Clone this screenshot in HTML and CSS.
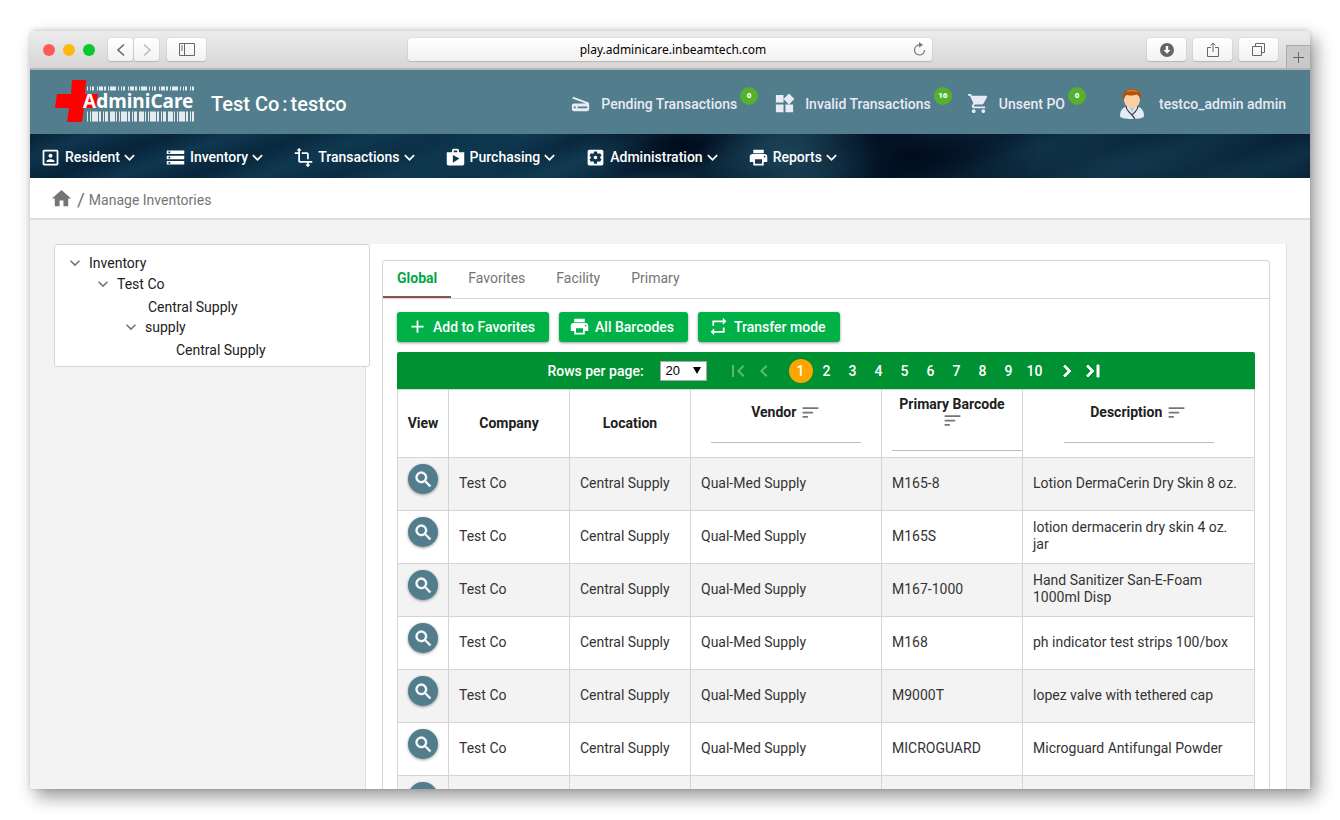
FILE: index.html
```
<!DOCTYPE html>
<html lang="en">
<head>
  <meta charset="UTF-8">
  <meta name="viewport" content="width=device-width, initial-scale=1.0">
  <title>AdminiCare - Manage Inventories</title>
  <link rel="stylesheet" href="styles.css">
</head>
<body>
  <!-- shared icons -->
  <svg class="sprite" aria-hidden="true">
    <symbol id="i-down" viewBox="0 0 24 24"><path d="M16.59 8.59L12 13.17 7.41 8.59 6 10l6 6 6-6z"/></symbol>
    <symbol id="i-print" viewBox="0 0 24 24"><path d="M19 8H5c-1.66 0-3 1.34-3 3v6h4v4h12v-4h4v-6c0-1.66-1.34-3-3-3zm-3 11H8v-5h8v5zm3-7c-.55 0-1-.45-1-1s.45-1 1-1 1 .45 1 1-.45 1-1 1zm-1-9H6v4h12V3z"/></symbol>
    <symbol id="i-search" viewBox="0 0 24 24"><path d="M15.5 14h-.79l-.28-.27C15.41 12.59 16 11.11 16 9.5 16 5.91 13.09 3 9.5 3S3 5.91 3 9.5 5.91 16 9.5 16c1.61 0 3.09-.59 4.23-1.57l.27.28v.79l5 4.99L20.49 19l-4.99-5zm-6 0C7.01 14 5 11.99 5 9.5S7.01 5 9.5 5 14 7.01 14 9.5 11.99 14 9.5 14z"/></symbol>
    <symbol id="i-sort" viewBox="0 0 24 24"><path d="M3 18h6v-2H3v2zM3 6v2h18V6H3zm0 7h12v-2H3v2z"/></symbol>
  </svg>

  <div class="window">
    <div class="chrome">
      <div class="chrome-left">
        <span class="dot red"></span>
        <span class="dot yellow"></span>
        <span class="dot green"></span>
        <div class="history">
          <button class="chrome-btn" aria-label="Back"><svg width="10" height="14" viewBox="0 0 10 14"><path d="M8 1.500L2 7l6 5.500" fill="none" stroke="#666" stroke-width="1.600"/></svg></button>
          <button class="chrome-btn" aria-label="Forward"><svg width="10" height="14" viewBox="0 0 10 14"><path d="M2 1.500L8 7l-6 5.500" fill="none" stroke="#bbb" stroke-width="1.600"/></svg></button>
        </div>
        <button class="chrome-btn wide" aria-label="Sidebar"><svg width="16" height="13" viewBox="0 0 16 13"><path d="M.5.5h15v12H.5zM5.500.5v12M2 3h2M2 5h2M2 7h2" fill="none" stroke="#666"/></svg></button>
      </div>
      <div class="url-bar">
        <input class="url" type="text" value="play.adminicare.inbeamtech.com" aria-label="Address">
        <button class="reload" aria-label="Reload"><svg width="13" height="15" viewBox="0 0 13 15"><path d="M7 3a5 5 0 1 0 4.500 5" fill="none" stroke="#777" stroke-width="1.200"/><path d="M6 0l4 3-4 2.500z" fill="#777"/></svg></button>
      </div>
      <div class="chrome-right">
        <button class="chrome-btn wide" aria-label="Downloads"><svg width="14" height="14" viewBox="0 0 14 14"><circle cx="7" cy="7" r="7" fill="#666"/><path d="M5.800 3h2.400v4h2.300L7 10.800 3.500 7h2.300z" fill="#fff"/></svg></button>
        <button class="chrome-btn wide" aria-label="Share"><svg width="12" height="16" viewBox="0 0 12 16"><path d="M4 5.500H.5v9h11v-9H8M6 10V1M3.500 3.500L6 1l2.500 2.500" fill="none" stroke="#666"/></svg></button>
        <button class="chrome-btn wide" aria-label="Show tabs"><svg width="13" height="13" viewBox="0 0 13 13"><path d="M.5 3.500h9v9h-9zM3.500 3.500v-3h9v9h-3" fill="none" stroke="#666"/></svg></button>
        <button class="new-tab" aria-label="New tab"><svg width="11" height="11" viewBox="0 0 11 11"><path d="M5.500 0v11M0 5.500h11" stroke="#666"/></svg></button>
      </div>
    </div>

    <header class="header">
      <a class="logo" href="#" aria-label="AdminiCare">
        <svg width="142" height="44" viewBox="0 0 142 44">
          <path d="M18 1h14l-1 14h13l-2 14H30l-2 14H13l2-14H1l2-14h14z" fill="#f00"/>
          <path d="M33 9.500h107" stroke="#fff" stroke-width="4" stroke-dasharray="1 2 1 1 2 3 1 1 4 1 2 2 1 1 6 2" opacity=".85"/>
          <path d="M33 37.500h107" stroke="#fff" stroke-width="10" stroke-dasharray="1 2 1 1 6 1 2 2 1 1 3 2 5 1" opacity=".85"/>
          <text class="logo-text" x="29" y="29">AdminiCare</text>
        </svg>
      </a>
      <h1 class="facility"><span>Test Co</span><span>:</span><span>testco</span></h1>
      <div class="header-links">
        <a class="header-link" href="#">
          <svg class="icon-lg" viewBox="0 0 24 24"><path d="M19.800 10.700L4.200 5l-.7 1.900L17.600 12H5c-1.100 0-2 .9-2 2v4c0 1.100.9 2 2 2h14c1.100 0 2-.9 2-2v-5.500c0-.8-.5-1.600-1.200-1.800zM7 17H5v-2h2v2zm12 0H9v-2h10v2z"/></svg>
          <span>Pending Transactions</span>
          <span class="badge">0</span>
        </a>
        <a class="header-link" href="#">
          <svg class="icon-lg" viewBox="0 0 24 24"><path d="M13 13v8h8v-8h-8zM3 21h8v-8H3v8zM3 3v8h8V3H3zm13.660-1.310L11 7.340 16.660 13l5.660-5.660-5.660-5.650z"/></svg>
          <span>Invalid Transactions</span>
          <span class="badge">16</span>
        </a>
        <a class="header-link" href="#">
          <svg class="icon-lg" viewBox="0 0 24 24"><path d="M7 18c-1.100 0-1.990.9-1.990 2S5.900 22 7 22s2-.9 2-2-.9-2-2-2zM1 2v2h2l3.600 7.590-1.350 2.450c-.16.28-.25.61-.25.96 0 1.100.9 2 2 2h12v-2H7.420c-.14 0-.25-.11-.25-.25l.03-.12.9-1.630h7.450c.75 0 1.410-.41 1.750-1.030l3.580-6.490c.08-.14.12-.31.12-.48 0-.55-.45-1-1-1H5.210l-.94-2H1zm16 16c-1.100 0-1.990.9-1.990 2s.89 2 1.990 2 2-.9 2-2-.9-2-2-2z"/></svg>
          <span>Unsent PO</span>
          <span class="badge">0</span>
        </a>
      </div>
      <a class="user" href="#">
        <svg width="26" height="32" viewBox="0 0 26 32">
          <path d="M1 28c0-6 3-9 8-10h8c5 1 8 4 8 10 0 2-5 3-12 3S1 30 1 28z" fill="#e3ebfa"/>
          <path d="M9 18l4 6 4-6z" fill="#a9c4e8"/>
          <path d="M5 11c0 6 4 9.500 8 9.500s8-3.500 8-9.500l-2-5H7z" fill="#fbcfa4"/>
          <path d="M4.500 12C2 5 7 1 13 1s11 4 8.500 11c-.5-3-2-5-4-5.500-3 1.500-8 1-10 .5-1.500 1-2.500 3-3 5z" fill="#b5500c"/>
          <path d="M7 4c3-3 9-3 12 0-4-1-8-1-12 0z" fill="#e08132"/>
          <path d="M7 18c0 5 3 5 6 9 3-4 6-4 6-9M13 27l3 4" fill="none" stroke="#444" stroke-width="1.300"/>
        </svg>
        <span>testco_admin admin</span>
      </a>
    </header>

    <nav class="menu">
      <button class="menu-item">
        <svg class="icon" viewBox="0 0 24 24"><path d="M12 12.250c1.240 0 2.250-1.010 2.250-2.250S13.240 7.750 12 7.750 9.750 8.760 9.750 10s1.010 2.250 2.250 2.250zm4.500 4c0-1.500-3-2.250-4.500-2.250s-4.500.75-4.500 2.250V17h9v-.75zM19 3H5c-1.100 0-2 .9-2 2v14c0 1.100.9 2 2 2h14c1.100 0 2-.9 2-2V5c0-1.100-.9-2-2-2zm0 16H5V5h14v14z"/></svg>
        <span>Resident</span>
        <svg class="icon arrow"><use href="#i-down"/></svg>
      </button>
      <button class="menu-item">
        <svg class="icon" viewBox="0 0 24 24"><path d="M2 20h20v-4H2v4zm2-3h2v2H4v-2zM2 4v4h20V4H2zm4 3H4V5h2v2zm-4 7h20v-4H2v4zm2-3h2v2H4v-2z"/></svg>
        <span>Inventory</span>
        <svg class="icon arrow"><use href="#i-down"/></svg>
      </button>
      <button class="menu-item">
        <svg class="icon" viewBox="0 0 24 24"><path d="M22 18v-2H8V4h2L7 1 4 4h2v2H2v2h4v8c0 1.100.9 2 2 2h8v2h-2l3 3 3-3h-2v-2h4zM10 8h6v6h2V8c0-1.100-.9-2-2-2h-6v2z"/></svg>
        <span>Transactions</span>
        <svg class="icon arrow"><use href="#i-down"/></svg>
      </button>
      <button class="menu-item">
        <svg class="icon" viewBox="0 0 24 24"><path d="M16 6V4c0-1.110-.89-2-2-2h-4c-1.110 0-2 .89-2 2v2H2v13c0 1.110.89 2 2 2h16c1.110 0 2-.89 2-2V6h-6zm-6-2h4v2h-4V4zM9 18V9l7.500 4L9 18z"/></svg>
        <span>Purchasing</span>
        <svg class="icon arrow"><use href="#i-down"/></svg>
      </button>
      <button class="menu-item">
        <svg class="icon" viewBox="0 0 24 24"><path d="M12 10c-1.100 0-2 .9-2 2s.9 2 2 2 2-.9 2-2-.9-2-2-2zm7-7H5c-1.110 0-2 .9-2 2v14c0 1.100.89 2 2 2h14c1.110 0 2-.9 2-2V5c0-1.100-.89-2-2-2zm-1.750 9c0 .23-.02.46-.05.68l1.480 1.160c.13.11.17.3.08.45l-1.400 2.420c-.09.15-.27.21-.43.15l-1.740-.7c-.36.28-.76.51-1.180.69l-.26 1.850c-.03.17-.18.3-.35.3h-2.800c-.17 0-.32-.13-.35-.29l-.26-1.850c-.43-.18-.82-.41-1.180-.69l-1.740.7c-.16.06-.34 0-.43-.15l-1.400-2.420c-.09-.15-.05-.34.08-.45l1.480-1.160c-.03-.23-.05-.46-.05-.69 0-.23.02-.46.05-.68l-1.480-1.160c-.13-.11-.17-.3-.08-.45l1.400-2.420c.09-.15.27-.21.43-.15l1.740.7c.36-.28.76-.51 1.180-.69l.26-1.850c.03-.17.18-.3.35-.3h2.800c.17 0 .32.13.35.29l.26 1.850c.43.18.82.41 1.180.69l1.740-.7c.16-.06.34 0 .43.15l1.400 2.420c.09.15.05.34-.08.45l-1.480 1.160c.03.23.05.46.05.69z"/></svg>
        <span>Administration</span>
        <svg class="icon arrow"><use href="#i-down"/></svg>
      </button>
      <button class="menu-item">
        <svg class="icon"><use href="#i-print"/></svg>
        <span>Reports</span>
        <svg class="icon arrow"><use href="#i-down"/></svg>
      </button>
    </nav>

    <div class="breadcrumb">
      <a href="#" class="home" aria-label="Home"><svg class="icon-lg" viewBox="0 0 24 24"><path d="M10 20v-6h4v6h5v-8h3L12 3 2 12h3v8z"/></svg></a>
      <span class="slash">/</span>
      <a href="#">Manage Inventories</a>
    </div>

    <main class="content">
      <aside class="tree">
        <ul>
          <li>
            <button class="node"><svg class="toggle"><use href="#i-down"/></svg>Inventory</button>
            <ul>
              <li>
                <button class="node"><svg class="toggle"><use href="#i-down"/></svg>Test Co</button>
                <ul>
                  <li><button class="node leaf">Central Supply</button></li>
                  <li>
                    <button class="node"><svg class="toggle"><use href="#i-down"/></svg>supply</button>
                    <ul>
                      <li><button class="node leaf">Central Supply</button></li>
                    </ul>
                  </li>
                </ul>
              </li>
            </ul>
          </li>
        </ul>
      </aside>

      <section class="panel">
        <div class="card">
          <div class="tabs">
            <button class="tab active">Global</button>
            <button class="tab">Favorites</button>
            <button class="tab">Facility</button>
            <button class="tab">Primary</button>
          </div>
          <div class="card-body">
            <div class="actions">
              <button class="btn"><svg class="icon" viewBox="0 0 24 24"><path d="M19 13h-6v6h-2v-6H5v-2h6V5h2v6h6v2z"/></svg>Add to Favorites</button>
              <button class="btn"><svg class="icon"><use href="#i-print"/></svg>All Barcodes</button>
              <button class="btn"><svg class="icon" viewBox="0 0 24 24"><path d="M7 7h10v3l4-4-4-4v3H5v6h2V7zm10 10H7v-3l-4 4 4 4v-3h12v-6h-2v4z"/></svg>Transfer mode</button>
            </div>

            <div class="pager">
              <label for="rows">Rows per page:</label>
              <div class="rows">
                <select id="rows">
                  <option>10</option>
                  <option selected>20</option>
                  <option>50</option>
                </select>
              </div>
              <div class="pages">
                <button class="page" disabled aria-label="First page"><svg viewBox="0 0 24 24"><path d="M18.410 16.590L13.820 12l4.590-4.590L17 6l-6 6 6 6zM6 6h2v12H6z"/></svg></button>
                <button class="page" disabled aria-label="Previous page"><svg viewBox="0 0 24 24"><path d="M15.410 7.410L14 6l-6 6 6 6 1.410-1.410L10.830 12z"/></svg></button>
              </div>
              <div class="pages numbers">
                <button class="page current">1</button>
                <button class="page">2</button>
                <button class="page">3</button>
                <button class="page">4</button>
                <button class="page">5</button>
                <button class="page">6</button>
                <button class="page">7</button>
                <button class="page">8</button>
                <button class="page">9</button>
                <button class="page">10</button>
              </div>
              <div class="pages">
                <button class="page next" aria-label="Next page"><svg viewBox="0 0 24 24"><path d="M10 6L8.590 7.410 13.170 12l-4.580 4.590L10 18l6-6z"/></svg></button>
                <button class="page next" aria-label="Last page"><svg viewBox="0 0 24 24"><path d="M5.590 7.410L10.180 12l-4.590 4.590L7 18l6-6-6-6zM16 6h2v12h-2z"/></svg></button>
              </div>
            </div>

            <table class="inventory">
              <colgroup>
                <col class="col-view">
                <col class="col-company">
                <col class="col-location">
                <col class="col-vendor">
                <col class="col-barcode">
                <col>
              </colgroup>
              <thead>
                <tr>
                  <th>View</th>
                  <th>Company</th>
                  <th>Location</th>
                  <th>Vendor <svg class="sort"><use href="#i-sort"/></svg><input class="filter" type="text" aria-label="Filter by vendor"></th>
                  <th>Primary Barcode <svg class="sort"><use href="#i-sort"/></svg><input class="filter" type="text" aria-label="Filter by barcode"></th>
                  <th>Description <svg class="sort"><use href="#i-sort"/></svg><input class="filter" type="text" aria-label="Filter by description"></th>
                </tr>
              </thead>
              <tbody>
                <tr>
                  <td><button class="view" aria-label="View"><svg><use href="#i-search"/></svg></button></td>
                  <td>Test Co</td>
                  <td>Central Supply</td>
                  <td>Qual-Med Supply</td>
                  <td>M165-8</td>
                  <td>Lotion DermaCerin Dry Skin 8 oz.</td>
                </tr>
                <tr>
                  <td><button class="view" aria-label="View"><svg><use href="#i-search"/></svg></button></td>
                  <td>Test Co</td>
                  <td>Central Supply</td>
                  <td>Qual-Med Supply</td>
                  <td>M165S</td>
                  <td>lotion dermacerin dry skin 4 oz. jar</td>
                </tr>
                <tr>
                  <td><button class="view" aria-label="View"><svg><use href="#i-search"/></svg></button></td>
                  <td>Test Co</td>
                  <td>Central Supply</td>
                  <td>Qual-Med Supply</td>
                  <td>M167-1000</td>
                  <td>Hand Sanitizer San-E-Foam 1000ml Disp</td>
                </tr>
                <tr>
                  <td><button class="view" aria-label="View"><svg><use href="#i-search"/></svg></button></td>
                  <td>Test Co</td>
                  <td>Central Supply</td>
                  <td>Qual-Med Supply</td>
                  <td>M168</td>
                  <td>ph indicator test strips 100/box</td>
                </tr>
                <tr>
                  <td><button class="view" aria-label="View"><svg><use href="#i-search"/></svg></button></td>
                  <td>Test Co</td>
                  <td>Central Supply</td>
                  <td>Qual-Med Supply</td>
                  <td>M9000T</td>
                  <td>lopez valve with tethered cap</td>
                </tr>
                <tr>
                  <td><button class="view" aria-label="View"><svg><use href="#i-search"/></svg></button></td>
                  <td>Test Co</td>
                  <td>Central Supply</td>
                  <td>Qual-Med Supply</td>
                  <td>MICROGUARD</td>
                  <td>Microguard Antifungal Powder</td>
                </tr>
                <tr>
                  <td><button class="view" aria-label="View"><svg><use href="#i-search"/></svg></button></td>
                  <td></td>
                  <td></td>
                  <td></td>
                  <td></td>
                  <td></td>
                </tr>
              </tbody>
            </table>
          </div>
        </div>
      </section>
    </main>
  </div>
</body>
</html>
```
FILE: styles.css
```
* {
  box-sizing: border-box;
}
body {
  margin: 0;
  height: 100vh;
  padding: 30px 30px 31px;
  background: #fff;
  color: #212121;
  font-family: Roboto, Arial, sans-serif;
  font-size: 14px;
}
button {
  margin: 0;
  padding: 0;
  border: 0;
  background: none;
  color: inherit;
  font: inherit;
  cursor: pointer;
}
a {
  color: inherit;
  text-decoration: none;
}
ul {
  list-style: none;
  margin: 0;
  padding: 0;
}
svg {
  fill: currentColor;
  flex-shrink: 0;
}
.sprite {
  display: none;
}
.icon {
  width: 21px;
  height: 21px;
}
.icon-lg {
  width: 23px;
  height: 23px;
}
.window {
  height: 100%;
  display: flex;
  flex-direction: column;
  overflow: hidden;
  border-radius: 6px 6px 0 0;
  background: #f3f3f3;
  box-shadow: 6px 8px 18px rgba(0, 0, 0, 0.4), 0 0 4px rgba(0, 0, 0, 0.15);
}

/* browser bar */
.chrome {
  flex-shrink: 0;
  height: 40px;
  display: grid;
  grid-template-columns: 1fr minmax(0, 524px) 1fr;
  align-items: center;
  background: linear-gradient(#ececec, #d6d6d6);
  border-top: 1px solid #ddd;
  border-bottom: 2px solid #b4b6b6;
}
.chrome-left {
  display: flex;
  align-items: center;
  gap: 8px;
  padding-left: 13px;
}
.dot {
  width: 12px;
  height: 12px;
  border-radius: 50%;
}
.red {
  background: #fc5b57;
}
.yellow {
  background: #fdb90c;
}
.green {
  background: #05c92f;
}
.history {
  display: flex;
  gap: 1px;
  margin-left: 5px;
}
.chrome-btn {
  width: 25px;
  height: 23px;
  display: flex;
  align-items: center;
  justify-content: center;
  border-radius: 3px;
  background: linear-gradient(#fff, #f3f2f3);
  box-shadow: 0 0 1px #999, 0 1px 1px #bbb;
}
.chrome-btn.wide {
  width: 39px;
}
.url-bar {
  height: 23px;
  display: flex;
  align-items: center;
  padding: 0 6px 0 25px;
  border-radius: 3px;
  background: linear-gradient(#fff, #f3f0f0);
  box-shadow: 0 0 1px #999, 0 1px 1px #bbb;
}
.url {
  flex: 1;
  min-width: 0;
  border: 0;
  outline: 0;
  background: none;
  text-align: center;
  color: #000;
  font-family: "Noto Sans", sans-serif;
  font-size: 12px;
}
.reload {
  display: flex;
}
.chrome-right {
  align-self: stretch;
  display: flex;
  align-items: center;
  justify-content: flex-end;
  gap: 7px;
}
.new-tab {
  align-self: flex-end;
  width: 24px;
  height: 23px;
  margin-left: 1px;
  border: 1px solid #aaa;
  border-width: 1px 0 0 1px;
  background: #c9c9c9;
  display: flex;
  align-items: center;
  justify-content: center;
}

/* app header */
.header {
  flex-shrink: 0;
  height: 64px;
  display: flex;
  align-items: center;
  padding: 3px 24px 0;
  background: #517d8c;
  color: #fff;
}
.logo {
  display: flex;
  margin-bottom: 5px;
}
.logo-text {
  font-family: "Noto Sans", sans-serif;
  font-size: 19px;
  font-weight: 700;
}
.facility {
  display: flex;
  gap: 3px;
  margin: 0 0 0 15px;
  font-size: 20px;
  font-weight: 500;
}
.header-links {
  margin-left: auto;
  display: flex;
  gap: 15px;
  color: #e8eaf6;
  font-weight: 500;
}
.header-link {
  height: 34px;
  display: flex;
  align-items: center;
}
.header-link .icon-lg {
  margin-right: 9px;
}
.badge {
  align-self: flex-start;
  width: 18px;
  height: 18px;
  margin-left: 3px;
  border-radius: 50%;
  background: #56b02f;
  color: #fff;
  font-size: 8px;
  font-weight: 900;
  line-height: 18px;
  text-align: center;
}
.user {
  display: flex;
  align-items: center;
  gap: 14px;
  margin-left: 33px;
  color: #e8eaf6;
  font-weight: 500;
}

/* main menu */
.menu {
  flex-shrink: 0;
  height: 44px;
  display: flex;
  align-items: center;
  gap: 25px;
  padding: 2px 10px 0;
  color: #fff;
  background:
    linear-gradient(90deg, transparent 15%, rgba(13, 54, 77, 0.85) 36%, transparent 42%),
    radial-gradient(ellipse 90px 60px at 760px 22px, rgba(30, 70, 90, 0.9), transparent),
    radial-gradient(ellipse 130px 60px at 880px 22px, rgba(0, 8, 24, 0.9), transparent),
    radial-gradient(ellipse 90px 50px at 650px 10px, rgba(0, 8, 24, 0.9), transparent),
    radial-gradient(ellipse 260px 60px at 1090px 30px, rgba(20, 60, 80, 0.7), transparent),
    repeating-linear-gradient(160deg, rgba(0, 14, 32, 0.4) 0, rgba(30, 70, 90, 0.2) 22px, rgba(0, 14, 32, 0.4) 48px),
    linear-gradient(90deg, #0a3049, #103a52 40%, #06243b 66%, #08263c);
}
.menu-item {
  display: flex;
  align-items: center;
  font-weight: 500;
}
.menu-item span {
  margin-left: 4px;
}
.arrow {
  margin-left: -1px;
}

.breadcrumb {
  flex-shrink: 0;
  height: 42px;
  display: flex;
  align-items: center;
  gap: 4px;
  padding: 3px 0 0 20px;
  background: #fff;
  border-bottom: 2px solid #ddd;
  color: #757575;
}
.home {
  display: flex;
  margin-bottom: 3px;
}
.slash {
  font-size: 19px;
}

/* page content */
.content {
  flex: 1;
  min-height: 0;
  display: grid;
  grid-template-columns: 311px minmax(0, 1fr);
  padding: 24px 23px 0 24px;
}
.tree {
  align-self: start;
  position: relative;
  margin-right: -5px;
  padding: 7px 10px;
  border: 1px solid #d5d5d5;
  border-radius: 3px;
  background: #fff;
}
.tree ul ul {
  padding-left: 28px;
}
.node {
  height: 21px;
  display: flex;
  align-items: center;
  gap: 4px;
}
.node.leaf {
  height: 22px;
  padding: 3px 0 0 27px;
}
.toggle {
  width: 20px;
  height: 20px;
  color: #757575;
}
.panel {
  padding: 16px;
  border-right: 1px solid #ddd;
  border-left: 1px solid #ddd;
  border-radius: 3px;
  background: #fff;
}
.card {
  border: 1px solid #d5d5d5;
  border-radius: 3px;
}
.tabs {
  display: flex;
  gap: 3px;
  border-bottom: 1px solid #d5d5d5;
}
.tab {
  height: 37px;
  padding: 0 14px 2px;
  border-bottom: 2px solid transparent;
  color: #757575;
}
.tab.active {
  border-bottom-color: #8d5443;
  color: #00a748;
  font-weight: 700;
}
.card-body {
  padding: 13px 14px;
}
.actions {
  display: flex;
  gap: 10px;
  margin-bottom: 10px;
}
.btn {
  height: 30px;
  display: flex;
  align-items: center;
  gap: 5px;
  padding: 0 14px 1px 10px;
  border-radius: 3px;
  background: #00b148;
  color: #fff;
  font-weight: 500;
  box-shadow: 0 1px 3px rgba(0, 0, 0, 0.4);
}

.pager {
  height: 37px;
  display: flex;
  align-items: center;
  justify-content: center;
  border-radius: 2px 2px 0 0;
  background: #009232;
  color: #fff;
  font-weight: 500;
}
.rows {
  position: relative;
  margin: 0 19px 0 16px;
}
.rows::after {
  content: "";
  position: absolute;
  top: 6px;
  right: 6px;
  border: 4px solid transparent;
  border-top: 7px solid #000;
  border-bottom: 0;
  pointer-events: none;
}
.rows select {
  display: block;
  appearance: none;
  width: 47px;
  height: 20px;
  padding: 0 5px;
  border: 1px solid #a9a9a9;
  border-radius: 0;
  background: #fff;
  color: #000;
  font-family: Arial, "Liberation Sans", sans-serif;
  font-size: 13px;
}
.pages {
  display: flex;
  gap: 2px;
}
.numbers {
  margin: 0 8px 0 13px;
}
.page {
  width: 24px;
  height: 24px;
  border-radius: 50%;
}
.page svg {
  display: block;
  width: 24px;
  height: 24px;
}
.next svg {
  stroke: #fff;
  stroke-width: 1;
}
.page:disabled {
  opacity: 0.35;
}
.page.current {
  background: #ffa500;
}

.inventory {
  width: 100%;
  table-layout: fixed;
  border-collapse: collapse;
}
.col-view {
  width: 51px;
}
.col-company,
.col-location {
  width: 121px;
}
.col-vendor {
  width: 191px;
}
.col-barcode {
  width: 141px;
}
.inventory th,
.inventory td {
  padding: 0 10px;
  border: 1px solid #d5d5d5;
  line-height: 17px;
}
.inventory th {
  height: 68px;
  overflow: hidden;
  font-weight: 700;
}
.inventory td {
  height: 53px;
  padding-bottom: 2px;
  color: #333;
}
.inventory th:first-child {
  padding: 0;
}
.inventory tbody tr:nth-child(odd) {
  background: #f3f3f3;
}
.sort {
  width: 21px;
  height: 21px;
  margin: -3px 0 -1px;
  vertical-align: middle;
  color: #757575;
}
.filter {
  width: 150px;
  height: 21px;
  border: 0;
  border-bottom: 1px solid #bdbdbd;
  background: none;
}
.view {
  width: 30px;
  height: 30px;
  display: flex;
  align-items: center;
  justify-content: center;
  margin: 0 0 8px;
  border-radius: 50%;
  background: #517d8c;
  color: #fff;
  box-shadow: 0 1px 3px rgba(0, 0, 0, 0.4);
}
.view svg {
  width: 21px;
  height: 21px;
  stroke: #fff;
  stroke-width: 0.6;
}
```
